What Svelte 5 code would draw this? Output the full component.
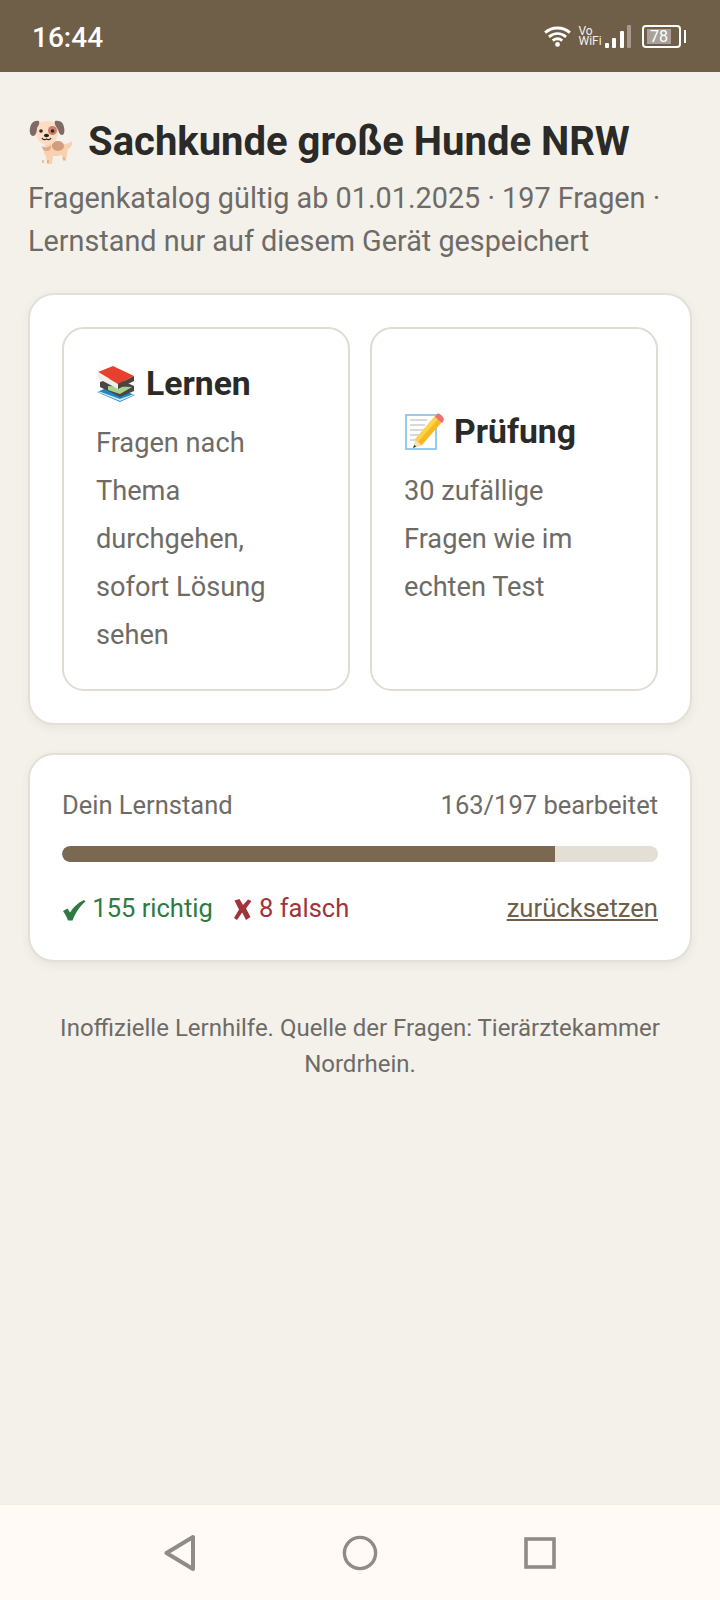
<script>
  const learned = 163, total = 197;
  const pct = (learned / total) * 100;
</script>

<div class="page">
  <header class="status">
    <span class="time">16:44</span>
    <div class="status-icons">
      <svg class="wifi" width="29" height="21" viewBox="0 0 28 22" aria-hidden="true">
        <g fill="none" stroke="#fff" stroke-width="3" stroke-linecap="butt">
          <path d="M1 7C8.500 .5 19.500 .5 27 7"/>
          <path d="M5 11.300C10.500 6.800 17.500 6.800 23 11.300"/>
          <path d="M9 15.300C12 13 16 13 19 15.300"/>
        </g>
        <circle cx="14" cy="19.300" r="2.500" fill="#fff"/>
      </svg>
      <span class="vowifi">Vo WiFi</span>
      <div class="signal">
        <i class="b1"></i><i class="b2"></i><i class="b3"></i><i class="b4"></i>
      </div>
      <div class="battery">
        <div class="cell"><span class="level">78</span></div>
        <i class="tip"></i>
      </div>
    </div>
  </header>

  <main>
    <h1>
      <svg class="dog" width="46" height="46" viewBox="0 0 46 46" aria-hidden="true">
        <path d="M20 24c6 0 13 0 16 1 3 0 6-1 8-3 1 3-1 7-4 8l-1 5-1 7h-3l-1-6c-3 1-6 1-9 1l-1 8h-5l-1-8c-4-4-3-10 2-13z" fill="#f9d0b0"/>
        <ellipse cx="30" cy="27" rx="6" ry="5" fill="#d49c7e"/>
        <path d="M8 11C8 5 13 2 19 2s11 3 11 9c1 8-4 15-11 15S7 19 8 11z" fill="#fcdcc2"/>
        <path d="M11 2C6 1 3 4 2 9c-1 5 1 8 3 8 3 0 4-5 4-8 1-2 3-4 2-7z" fill="#7f6a66"/>
        <path d="M27 2c5-1 8 1 9 6 1 5 0 8-2 8-3 0-3-4-5-7-1-2-3-4-2-7z" fill="#7f6a66"/>
        <circle cx="24.500" cy="11.500" r="4.500" fill="#c9806a"/>
        <circle cx="13" cy="12" r="1.800" fill="#33262a"/>
        <circle cx="24.500" cy="12" r="1.800" fill="#33262a"/>
        <ellipse cx="18.500" cy="16.500" rx="2.600" ry="1.800" fill="#2c2022"/>
        <path d="M14 19c1 2 3 2 4.500 1 1.500 1 3.500 1 4.500-1" fill="none" stroke="#2c2022" stroke-width="1.300"/>
        <path d="M14 27c2 2 7 2 9-1 0 4-1 6-4 6s-5-2-5-5z" fill="#e2a98c"/>
        <path d="M20 41l0 3M15 41l0 3M36 38l0 3" stroke="#c99a7c" stroke-width="1"/>
      </svg>
      <span>Sachkunde große Hunde NRW</span>
    </h1>
    <p class="sub">Fragenkatalog gültig ab 01.01.2025 · 197 Fragen · Lernstand nur auf diesem Gerät gespeichert</p>

    <section class="card modes">
      <div class="mode">
        <h2>
          <svg width="40" height="38" viewBox="0 0 40 38" aria-hidden="true">
            <path d="M1 27l14-6 24 9-15 7z" fill="#1e88c7"/>
            <path d="M2 27l22 9 14-6v-1l-14 5-22-8z" fill="#d8ecf6"/>
            <path d="M4 17l14-5 20 9v5l-14 6-20-10z" fill="#4a4643"/>
            <path d="M12 21l24 1-12 7-12-4z" fill="#a6d48e"/>
            <path d="M2 7l15-6 21 10-16 8z" fill="#e8402f"/>
            <path d="M2 7l20 12v5L3 14C1 12 1 9 2 7z" fill="#f2eee6"/>
            <path d="M22 19l16-8v5l-16 8z" fill="#50423f"/>
          </svg>
          <span>Lernen</span>
        </h2>
        <p>Fragen nach Thema durchgehen, sofort Lösung sehen</p>
      </div>
      <div class="mode">
        <h2>
          <svg width="40" height="38" viewBox="-1 0 40 38" aria-hidden="true">
            <rect x="1" y="2" width="30" height="34" fill="#fff" stroke="#7fbde8" stroke-width="1.600"/>
            <g stroke="#b4b4b4" stroke-width="1.200">
              <path d="M5 7h17M5 12h15M5 17h13M5 22h11M5 27h8"/>
            </g>
            <path d="M30 3l7 6-20 23-9 3 3-9z" fill="#f9b820"/>
            <path d="M30 3l3 3-20 23-3-3z" fill="#fcd34d"/>
            <path d="M32 1c2-1 3 0 5 2s2 3 1.500 5l-1.500 2-7-6z" fill="#ef6f78"/>
            <path d="M10.500 27l6 5-8.500 3z" fill="#f8e0bd"/>
            <path d="M9.300 32l2 1.600-3.300 1.400z" fill="#333"/>
          </svg>
          <span>Prüfung</span>
        </h2>
        <p>30 zufällige Fragen wie im echten Test</p>
      </div>
    </section>

    <section class="card progress">
      <div class="row head">
        <span>Dein Lernstand</span>
        <span>{learned}/{total} bearbeitet</span>
      </div>
      <div class="track"><div class="fill" style="width: {pct}%"></div></div>
      <div class="row foot">
        <div class="counts">
          <span class="ok"><svg width="24" height="22" viewBox="0 0 24 22" aria-hidden="true"><path d="M1 12l4.500-2.500 2.500 4C11.500 8 16 3.500 22 1l1.500 1.500C17 8 13.500 14 10.500 21.500L6 21.500C4.800 18 3 15 1 12z" fill="currentColor"/></svg> 155 richtig</span>
          <span class="bad"><svg width="20" height="23" viewBox="0 0 19 23" aria-hidden="true"><path d="M1 2.500L6 1l3.500 6L14.500 1.500 18 3l-5.500 7.500L17 19l-4.500 3-3.800-7.500L3.500 22 .5 20l5-8.500z" fill="currentColor"/></svg> 8 falsch</span>
        </div>
        <span class="reset">zurücksetzen</span>
      </div>
    </section>

    <p class="note">Inoffizielle Lernhilfe. Quelle der Fragen: Tierärztekammer Nordrhein.</p>
  </main>

  <nav class="navbar">
    <svg width="32" height="38" viewBox="0 0 32 38" aria-hidden="true">
      <path d="M2.500 19L29 3v32z" fill="none" stroke="#8f8c88" stroke-width="4" stroke-linejoin="round"/>
    </svg>
    <svg width="36" height="36" viewBox="0 0 36 36" aria-hidden="true">
      <circle cx="18" cy="18" r="15.600" fill="none" stroke="#8f8c88" stroke-width="3.400"/>
    </svg>
    <svg width="32" height="32" viewBox="0 0 32 32" aria-hidden="true">
      <rect x="2" y="2" width="28" height="28" fill="none" stroke="#8f8c88" stroke-width="3.600"/>
    </svg>
  </nav>
</div>

<style>
  :global(body) {
    margin: 0;
    background: #f4f1eb;
  }
  .page {
    width: 720px;
    height: 1600px;
    display: flex;
    flex-direction: column;
    font-family: Roboto, "Liberation Sans", sans-serif;
    color: #6e6b67;
    overflow: hidden;
  }
  .status {
    height: 72px;
    flex: none;
    background: #6f5e48;
    color: #fff;
    display: flex;
    align-items: center;
    justify-content: space-between;
    padding: 0 34px 0 32px;
    box-sizing: border-box;
  }
  .time {
    font-size: 28px;
    font-weight: 500;
    position: relative;
    top: 1px;
  }
  .status-icons {
    display: flex;
    align-items: center;
  }
  .wifi {
    margin-right: 7px;
  }
  .vowifi {
    display: block;
    width: 24px;
    font-size: 12px;
    line-height: 10.500px;
    margin-right: 2px;
    color: #f4f1ec;
  }
  .signal {
    display: flex;
    align-items: flex-end;
    gap: 3.500px;
    height: 23px;
    margin-right: 11px;
  }
  .signal i {
    width: 4px;
    background: #fff;
    border-radius: 1px;
  }
  .b1 { height: 5px; }
  .b2 { height: 10px; }
  .b3 { height: 17px; }
  .signal .b4 { height: 23px; background: #a5998b; }
  .battery {
    display: flex;
    align-items: center;
    gap: 3px;
  }
  .cell {
    width: 39px;
    height: 23px;
    box-sizing: border-box;
    border: 2px solid #fff;
    border-radius: 4px;
    padding: 2px 3px;
    display: flex;
  }
  .level {
    width: 24px;
    background: #a8a09a;
    font-size: 16px;
    line-height: 15px;
    text-align: center;
    color: #fff;
  }
  .tip {
    width: 2px;
    height: 13px;
    background: #fff;
  }
  main {
    flex: 1;
    padding: 43px 28px 0;
    box-sizing: border-box;
  }
  h1 {
    margin: 0;
    display: flex;
    align-items: center;
    gap: 14px;
    font-size: 40px;
    line-height: 54px;
    font-weight: 700;
    color: #2a2a28;
    white-space: nowrap;
  }
  .sub {
    margin: 8px 0 0;
    font-size: 28.800px;
    line-height: 43px;
  }
  .card {
    background: #fff;
    border: 2px solid #e4e0d8;
    border-radius: 26px;
    box-sizing: border-box;
    box-shadow: 0 3px 10px rgba(70, 60, 45, 0.07);
  }
  .modes {
    margin-top: 30px;
    padding: 32px;
    display: grid;
    grid-template-columns: 1fr 1fr;
    gap: 20px;
  }
  .mode {
    border: 2px solid #e0dcd3;
    border-radius: 22px;
    padding: 31px 31px 30px 32px;
    display: flex;
    flex-direction: column;
    justify-content: center;
    box-sizing: border-box;
  }
  h2 {
    margin: 0 0 11px;
    display: flex;
    align-items: center;
    gap: 10px;
    font-size: 33.700px;
    line-height: 48px;
    font-weight: 700;
    color: #2a2a28;
  }
  .mode p {
    margin: 0;
    font-size: 27.200px;
    line-height: 48px;
  }
  .progress {
    margin-top: 28px;
    height: 209px;
    padding: 28px 32px 0;
  }
  .row {
    display: flex;
    justify-content: space-between;
    align-items: center;
    font-size: 25.500px;
    line-height: 44px;
  }
  .track {
    margin-top: 19px;
    height: 16px;
    background: #e3dfd6;
    border-radius: 8px;
    overflow: hidden;
  }
  .fill {
    height: 100%;
    background: #7b6850;
    border-radius: 8px 0 0 8px;
  }
  .foot {
    margin-top: 24px;
  }
  .counts {
    display: flex;
    gap: 20px;
  }
  .ok {
    color: #2e7a45;
  }
  .bad {
    color: #a1343a;
  }
  .counts svg {
    vertical-align: -4px;
  }
  .reset {
    color: #6f5e48;
    font-size: 25.600px;
    text-decoration: underline;
  }
  .note {
    margin: 48px 0 0;
    padding: 0 3px;
    text-align: center;
    font-size: 24px;
    line-height: 36px;
  }
  .navbar {
    height: 96px;
    flex: none;
    background: #fffaf5;
    border-top: 1px solid #f5ebe0;
    box-sizing: border-box;
    display: grid;
    grid-template-columns: repeat(3, 180px);
    justify-content: center;
    justify-items: center;
    align-items: center;
  }
</style>
